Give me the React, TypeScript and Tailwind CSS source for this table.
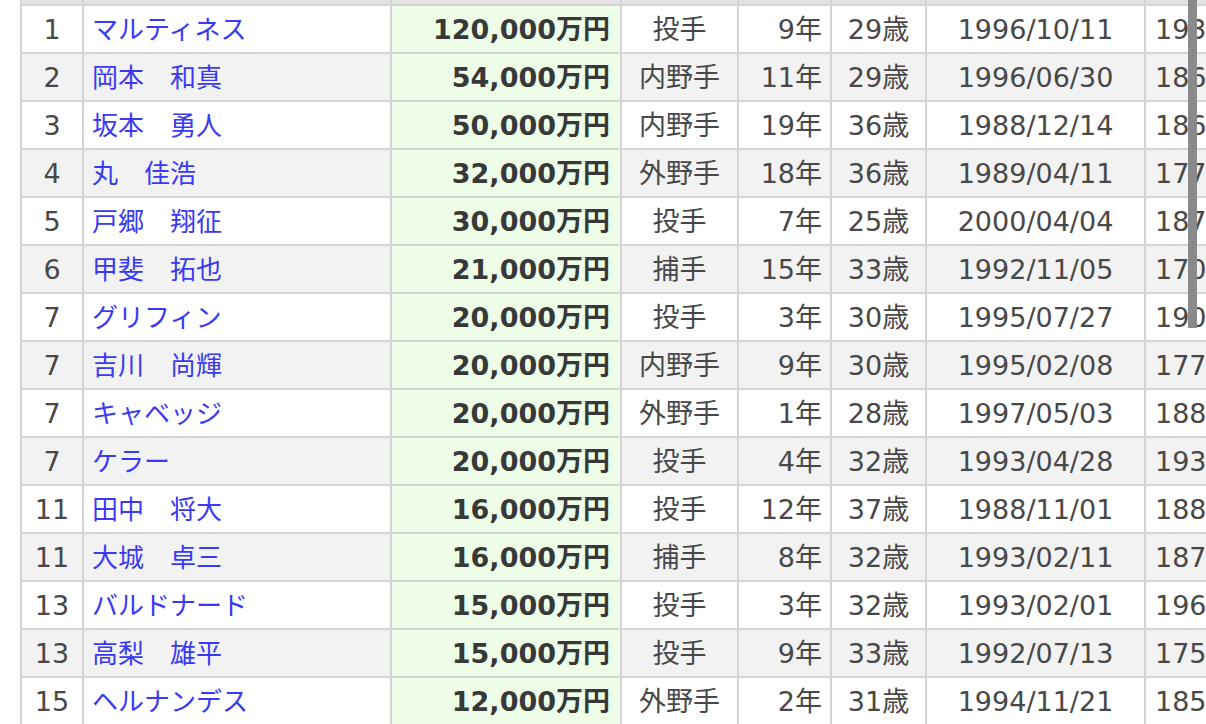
const rows = [
  { rank: "1", name: "マルティネス", salary: "120,000万円", pos: "投手", years: "9年", age: "29歳", born: "1996/10/11", height: "193cm" },
  { rank: "2", name: "岡本　和真", salary: "54,000万円", pos: "内野手", years: "11年", age: "29歳", born: "1996/06/30", height: "186cm" },
  { rank: "3", name: "坂本　勇人", salary: "50,000万円", pos: "内野手", years: "19年", age: "36歳", born: "1988/12/14", height: "186cm" },
  { rank: "4", name: "丸　佳浩", salary: "32,000万円", pos: "外野手", years: "18年", age: "36歳", born: "1989/04/11", height: "177cm" },
  { rank: "5", name: "戸郷　翔征", salary: "30,000万円", pos: "投手", years: "7年", age: "25歳", born: "2000/04/04", height: "187cm" },
  { rank: "6", name: "甲斐　拓也", salary: "21,000万円", pos: "捕手", years: "15年", age: "33歳", born: "1992/11/05", height: "170cm" },
  { rank: "7", name: "グリフィン", salary: "20,000万円", pos: "投手", years: "3年", age: "30歳", born: "1995/07/27", height: "190cm" },
  { rank: "7", name: "吉川　尚輝", salary: "20,000万円", pos: "内野手", years: "9年", age: "30歳", born: "1995/02/08", height: "177cm" },
  { rank: "7", name: "キャベッジ", salary: "20,000万円", pos: "外野手", years: "1年", age: "28歳", born: "1997/05/03", height: "188cm" },
  { rank: "7", name: "ケラー", salary: "20,000万円", pos: "投手", years: "4年", age: "32歳", born: "1993/04/28", height: "193cm" },
  { rank: "11", name: "田中　将大", salary: "16,000万円", pos: "投手", years: "12年", age: "37歳", born: "1988/11/01", height: "188cm" },
  { rank: "11", name: "大城　卓三", salary: "16,000万円", pos: "捕手", years: "8年", age: "32歳", born: "1993/02/11", height: "187cm" },
  { rank: "13", name: "バルドナード", salary: "15,000万円", pos: "投手", years: "3年", age: "32歳", born: "1993/02/01", height: "196cm" },
  { rank: "13", name: "高梨　雄平", salary: "15,000万円", pos: "投手", years: "9年", age: "33歳", born: "1992/07/13", height: "175cm" },
  { rank: "15", name: "ヘルナンデス", salary: "12,000万円", pos: "外野手", years: "2年", age: "31歳", born: "1994/11/21", height: "185cm" },
];

const cell = "h-full flex items-center pt-[2px] border-r-2 border-[#d4d4d4] shrink-0 whitespace-nowrap";

const App = () => {
  return (
    <div
      className="relative w-[1206px] h-[724px] overflow-hidden bg-white text-[27px] text-[#484848]"
      style={{ fontFamily: '"DejaVu Sans", "Noto Sans CJK JP", sans-serif' }}
    >
      <div className="ml-5 w-[1300px] border-l-2 border-[#d4d4d4]">
        {/* header row, mostly scrolled out of view */}
        <div className="flex h-[6px] bg-[#e4e4e4] border-b-2 border-[#d4d4d4]">
          <div className="w-[62px] border-r-2 border-[#d4d4d4]" />
          <div className="w-[308px] border-r-2 border-[#d4d4d4]" />
          <div className="w-[230px] border-r-2 border-[#d4d4d4]" />
          <div className="w-[117px] border-r-2 border-[#d4d4d4]" />
          <div className="w-[93px] border-r-2 border-[#d4d4d4]" />
          <div className="w-[95px] border-r-2 border-[#d4d4d4]" />
          <div className="w-[219px] border-r-2 border-[#d4d4d4]" />
        </div>

        {rows.map((r, i) => (
          <div
            key={i}
            className={`flex h-[48px] border-b-2 border-[#d4d4d4] ${i % 2 === 1 ? "bg-[#f2f2f2]" : "bg-white"}`}
          >
            <div className={`${cell} w-[62px] justify-center`}>{r.rank}</div>
            <div className={`${cell} w-[308px] pl-[8px] text-[26px] text-[#3a3af5]`}>{r.name}</div>
            <div className={`${cell} w-[230px] justify-end pr-[10px] bg-[#edfde8] font-bold text-[#383838]`}>
              {r.salary}
            </div>
            <div className={`${cell} w-[117px] justify-center`}>{r.pos}</div>
            <div className={`${cell} w-[93px] justify-end pr-[8px]`}>{r.years}</div>
            <div className={`${cell} w-[95px] justify-center`}>{r.age}</div>
            <div className={`${cell} w-[219px] justify-center`}>{r.born}</div>
            <div className={`${cell} w-[120px] pl-[9px]`}>{r.height}</div>
          </div>
        ))}
      </div>

      {/* scrollbar thumb */}
      <div className="absolute left-[1188px] top-0 w-[9px] h-[328px] bg-[#8a8a8a]" />
    </div>
  );
};

export default App;
